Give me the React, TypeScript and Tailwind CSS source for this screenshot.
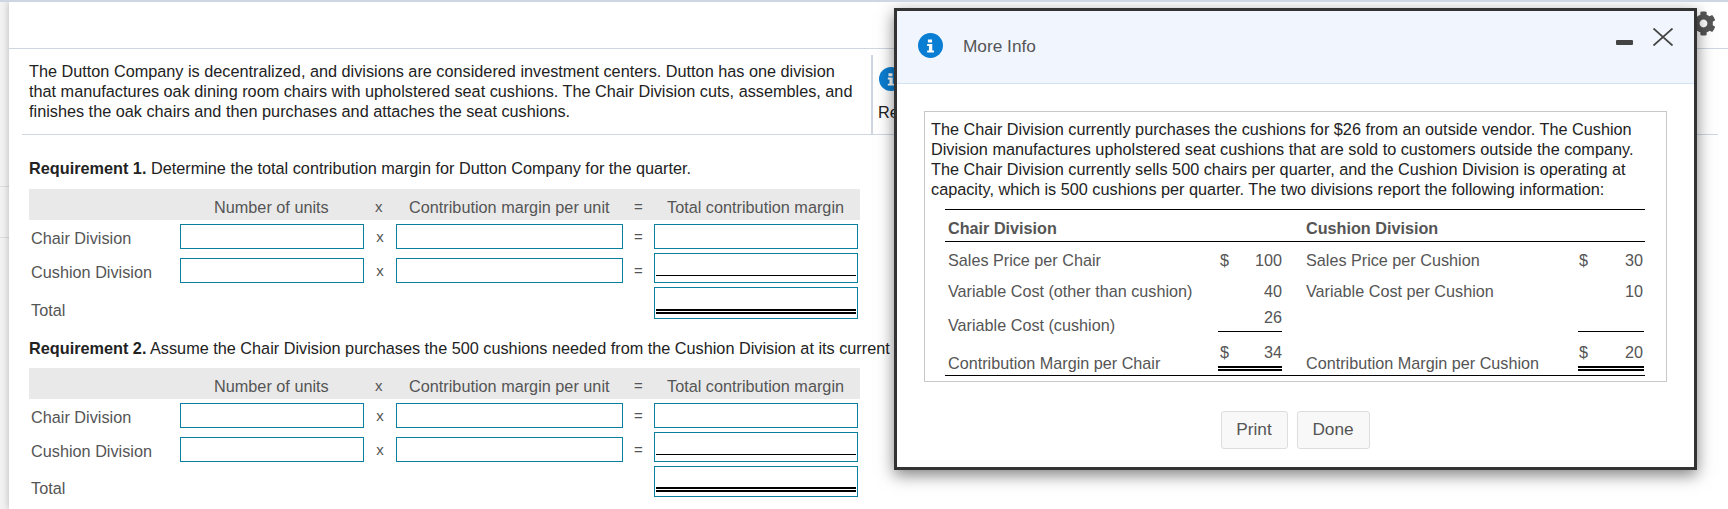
import { FaCog } from 'react-icons/fa'

const ruleColor = 'border-[#cfd6e2]'

function InfoIcon({ className }: { className: string }) {
    return (
        <svg viewBox="0 0 24 24" className={className}>
            <circle cx="12" cy="12" r="12" fill="#0a7ed2" />
            <path d="M9.5 6.2h4v3h-4zM8.8 10.6h4.9v6.2h1.6v1.8H8.8v-1.8h1.7v-4.4H8.8z" fill="#fff" />
        </svg>
    )
}

function Box({ width = 'w-[184px]', height = 'h-[25px]', line }: { width?: string; height?: string; line?: 'single' | 'double' }) {
    return (
        <div className={`${width} ${height} flex flex-col justify-end border border-[#0b7fa0] bg-white px-[1px]`}>
            {line === 'single' && <div className="mb-[6px] border-b-[1.5px] border-black" />}
            {line === 'double' && <div className="mb-[4px] h-[5px] border-y-2 border-black" />}
        </div>
    )
}

function Row({ label, boxes = true, height, line, labelClass, className }: { label: string; boxes?: boolean; height?: string; line?: 'single' | 'double'; labelClass: string; className?: string }) {
    return (
        <div className={`flex items-end text-[16.25px] text-[#555] ${className ?? ''}`}>
            <div className={`w-[151px] shrink-0 pl-[2px] leading-[20px] ${labelClass}`}>{label}</div>
            {boxes ? (
                <>
                    <Box />
                    <div className="flex h-[25px] w-[32px] items-center justify-center pt-[2px] text-[15px]">x</div>
                    <Box width="w-[227px]" />
                    <div className="flex h-[25px] w-[31px] items-center justify-center pt-[1px] text-[15px]">=</div>
                </>
            ) : (
                <div className="w-[474px]" />
            )}
            <Box width="w-[204px]" height={height} line={line} />
        </div>
    )
}

function MarginTable({ totalClass }: { totalClass: string }) {
    return (
        <div>
            <div className="flex h-[31px] w-[831px] items-center bg-[#e9e9e9] pt-[5px] text-[16.25px] text-[#555]">
                <div className="w-[185px]" />
                <div className="w-[161px]">Number of units</div>
                <div className="w-[34px] text-[15px]">x</div>
                <div className="w-[225px] whitespace-nowrap">Contribution margin per unit</div>
                <div className="w-[33px] text-[15px]">=</div>
                <div className="whitespace-nowrap">Total contribution margin</div>
            </div>
            <Row label="Chair Division" labelClass="pb-[1px]" className="mt-[4px]" />
            <Row label="Cushion Division" labelClass="pb-[1px]" height="h-[30px]" line="single" className="mt-[4px]" />
            <Row label="Total" labelClass="-mb-[1px]" boxes={false} height={totalClass} line="double" className="mt-[4px]" />
        </div>
    )
}

function InfoRow({ label, sign, value, label2, sign2, value2, className }: { label: string; sign?: string; value?: string; label2?: string; sign2?: string; value2?: string; className: string }) {
    return (
        <div className={`flex items-center ${className}`}>
            <div className="w-[273px] pl-[3px]">{label}</div>
            <div className="flex w-[64px] justify-between pl-[2px]">
                <span>{sign}</span>
                <span>{value}</span>
            </div>
            <div className="w-[296px] pl-[24px]">{label2}</div>
            <div className="flex w-[66px] justify-between pl-[1px] pr-[1px]">
                <span>{sign2}</span>
                <span>{value2}</span>
            </div>
        </div>
    )
}

function MoreInfo() {
    return (
        <div className="absolute left-[894px] top-[6px] flex h-[462px] w-[803px] flex-col border-[3px] border-[#333] bg-white shadow-[0_5px_15px_rgba(0,0,0,0.5)]">
            <div className="flex h-[73px] shrink-0 items-start border-b border-[#d3e2f0] bg-[#f1f6fe] pl-[21px] pr-[21px]">
                <InfoIcon className="mt-[22px] h-[25px] w-[25px]" />
                <div className="ml-[20px] mt-[24px] text-[17.25px] leading-[22px] text-[#555]">More Info</div>
                <div className="ml-auto mt-[17px] flex items-start gap-[20px]">
                    <div className="mt-[12px] h-[5px] w-[17px] rounded-[1px] bg-[#444]" />
                    <svg viewBox="0 0 20 18" className="h-[18px] w-[20px]" fill="none" stroke="#444" strokeWidth="1.8">
                        <path d="M0.5 0.5 19.5 17.5M19.5 0.5 0.5 17.5" />
                    </svg>
                </div>
            </div>
            <div className="mx-[27px] mt-[27px] h-[271px] border border-[#c8c8c8] px-[6px] pt-[7px] text-[16.25px] leading-[20px] text-[#222]">
                <p className="whitespace-nowrap">
                    The Chair Division currently purchases the cushions for $26 from an outside vendor. The Cushion
                    <br />
                    Division manufactures upholstered seat cushions that are sold to customers outside the company.
                    <br />
                    The Chair Division currently sells 500 chairs per quarter, and the Cushion Division is operating at
                    <br />
                    capacity, which is 500 cushions per quarter. The two divisions report the following information:
                </p>
                <div className="mx-[14px] mt-[10px] w-[700px] border-y-[1.5px] border-black text-[16.2px] leading-[18px] text-[#555]">
                    <InfoRow label="Chair Division" label2="Cushion Division" className="h-[32px] border-b-[1.5px] border-black pt-[4px] font-bold" />
                    <InfoRow label="Sales Price per Chair" sign="$" value="100" label2="Sales Price per Cushion" sign2="$" value2="30" className="mt-[1px] h-[34px]" />
                    <InfoRow label="Variable Cost (other than cushion)" value="40" label2="Variable Cost per Cushion" value2="10" className="h-[28px]" />
                    <div className="flex h-[38px]">
                        <div className="w-[273px] pl-[3px] pt-[11px]">Variable Cost (cushion)</div>
                        <div className="h-[27px] w-[64px] border-b-[1.5px] border-black pt-[3px] text-right">26</div>
                        <div className="w-[296px]" />
                        <div className="h-[27px] w-[66px] border-b-[1.5px] border-black" />
                    </div>
                    <div className="flex h-[32px]">
                        <div className="w-[273px] pl-[3px] pt-[11px]">Contribution Margin per Chair</div>
                        <div className="flex h-[28px] w-[64px] justify-between border-b-[5px] border-double border-black pl-[2px]">
                            <span>$</span>
                            <span>34</span>
                        </div>
                        <div className="w-[296px] pl-[24px] pt-[11px]">Contribution Margin per Cushion</div>
                        <div className="flex h-[28px] w-[66px] justify-between border-b-[5px] border-double border-black pl-[1px] pr-[1px]">
                            <span>$</span>
                            <span>20</span>
                        </div>
                    </div>
                </div>
            </div>
            <div className="mt-[29px] flex justify-center gap-[9px] pr-[1px] text-[17.25px] text-[#555]">
                <button className="h-[38px] w-[67px] rounded-[3px] border border-[#ddd] bg-[#f8f8f8]">Print</button>
                <button className="h-[38px] w-[73px] rounded-[3px] border border-[#ddd] bg-[#f8f8f8]">Done</button>
            </div>
        </div>
    )
}

export default function App() {
    return (
        <div className="relative flex h-[509px] w-[1728px] overflow-hidden border-t-2 border-[#cfd6e2] bg-white font-['Liberation_Sans',Arial,sans-serif]">
            <aside className="flex w-[9px] shrink-0 flex-col bg-[#f2f2f2]">
                <div className="mt-[184px] h-[52px] border-y border-[#dcdcdc]" />
            </aside>
            <main className="relative flex min-w-0 flex-1 flex-col bg-white shadow-[0_0_7px_rgba(0,0,0,0.25)]">
                <div className={`flex h-[47px] shrink-0 justify-end border-b ${ruleColor} pr-[12px] pt-[9px]`}>
                    <FaCog className="h-[25px] w-[25px] text-[#555]" />
                </div>
                <div className={`ml-[13px] mr-[10px] flex h-[86px] shrink-0 border-b ${ruleColor}`}>
                    <p className="w-[849px] shrink-0 whitespace-nowrap pl-[7px] pt-[12px] text-[16.25px] leading-[20px] text-[#222]">
                        The Dutton Company is decentralized, and divisions are considered investment centers. Dutton has one division
                        <br />
                        that manufactures oak dining room chairs with upholstered seat cushions. The Chair Division cuts, assembles, and
                        <br />
                        finishes the oak chairs and then purchases and attaches the seat cushions.
                    </p>
                    <div className={`mt-[6px] flex-1 border-l-2 ${ruleColor} pl-[5px] pt-[12px] text-[16.25px] leading-[20px] text-[#222]`}>
                        <InfoIcon className="ml-[1px] h-[24px] w-[24px]" />
                        <div className="mt-[11px]">Re</div>
                    </div>
                </div>
                <div className="pl-[20px] text-[#222]">
                    <p className="mt-[23px] h-[20px] text-[16.25px] leading-[20px]">
                        <b>Requirement 1.</b> Determine the total contribution margin for Dutton Company for the quarter.
                    </p>
                    <div className="mt-[11px]">
                        <MarginTable totalClass="h-[32px]" />
                    </div>
                    <p className="mt-[19px] h-[20px] whitespace-nowrap text-[16.25px] leading-[20px]">
                        <b>Requirement 2.</b> Assume the Chair Division purchases the 500 cushions needed from the Cushion Division at its current
                    </p>
                    <div className="mt-[10px]">
                        <MarginTable totalClass="h-[31px]" />
                    </div>
                </div>
            </main>
            <MoreInfo />
        </div>
    )
}
